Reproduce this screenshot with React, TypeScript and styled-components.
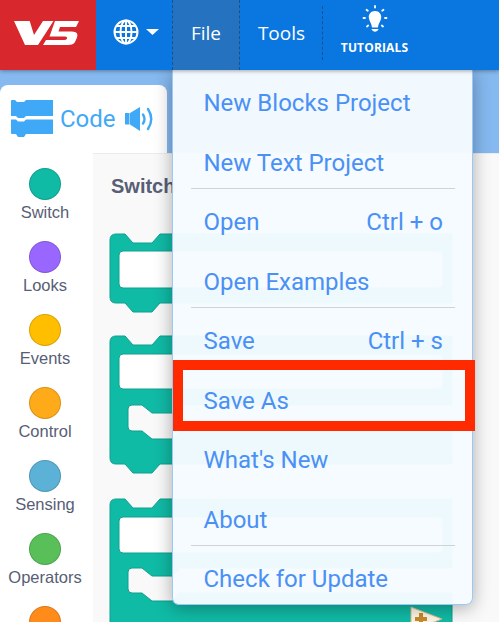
import { Fragment } from "react";
import styled, { createGlobalStyle } from "styled-components";

const GlobalStyle = createGlobalStyle`
  html, body {
    margin: 0;
    padding: 0;
    background: #f9f9f9;
  }
`;

const Page = styled.div`
  position: relative;
  width: 499px;
  height: 622px;
  overflow: hidden;
  display: flex;
  flex-direction: column;
`;

const NavBar = styled.header`
  position: relative;
  z-index: 3;
  flex: none;
  height: 70px;
  display: flex;
  background: #0a76e0;
  box-shadow: 0 1px 4px rgba(0, 0, 0, 0.35);
  color: #fff;
  font-family: "Open Sans", sans-serif;
`;

const Logo = styled.div`
  width: 96px;
  box-sizing: border-box;
  padding: 0 2px 4px 0;
  background: #d9272e;
  display: flex;
  align-items: center;
  justify-content: center;
`;

const LangButton = styled.div`
  width: 76px;
  display: flex;
  align-items: center;
  padding: 0 0 6px 17px;
  box-sizing: border-box;
  gap: 7px;
`;

const FileTab = styled.div`
  width: 68px;
  box-sizing: border-box;
  padding-bottom: 4px;
  background: #2472c0;
  border-left: 1px dashed #17518e;
  border-right: 1px dashed #17518e;
  display: flex;
  align-items: center;
  justify-content: center;
  font-size: 19px;
`;

const ToolsTab = styled.div`
  width: 83px;
  height: 54px;
  margin-top: 6px;
  padding-left: 1px;
  box-sizing: border-box;
  border-right: 1px dashed #17518e;
  display: flex;
  align-items: center;
  justify-content: center;
  font-size: 19px;
`;

const TutorialsTab = styled.div`
  width: 104px;
  display: flex;
  flex-direction: column;
  align-items: center;
  padding: 5px 1px 0 0;
  box-sizing: border-box;
  font-size: 12px;
  font-weight: 700;
  letter-spacing: 0.15px;
  gap: 8px;
  line-height: 14px;
`;

const Body = styled.main`
  flex: 1;
  min-height: 0;
  display: flex;
  flex-direction: column;
  padding-top: 15px;
  background: #85b9ef;
`;

const CodeTab = styled.div`
  flex: none;
  width: 167px;
  height: 68px;
  box-sizing: border-box;
  padding: 0 0 0 11px;
  display: flex;
  align-items: flex-start;
  gap: 7px;
  background: #fff;
  border-radius: 8px 8px 0 0;
  color: #40a9f7;
  font: 400 24px Roboto, sans-serif;
`;

const CodeLabel = styled.span`
  line-height: 36px;
  margin-top: 16px;
`;

const TabIcon = styled.svg`
  margin-top: 15px;
  flex: none;
`;

const SpeakerSvg = styled.svg`
  margin: 22px 0 0 2px;
  flex: none;
`;

const Workspace = styled.div`
  flex: 1;
  min-height: 0;
  display: flex;
`;

const CategoryList = styled.nav`
  flex: none;
  width: 93px;
  padding-top: 15px;
  background: #fff;
  display: flex;
  flex-direction: column;
  align-items: flex-start;
  box-sizing: border-box;
  gap: 8px;
`;

const Category = styled.div`
  flex: none;
  width: 90px;
  height: 65px;
  display: flex;
  flex-direction: column;
  align-items: center;
  gap: 3px;
  font: 400 16.5px "Liberation Sans", sans-serif;
  line-height: 18px;
  color: #575e75;
`;

const Dot = styled.span<{ $color: string }>`
  width: 32px;
  height: 32px;
  flex: none;
  box-sizing: border-box;
  border-radius: 50%;
  background: ${(p) => p.$color};
  border: 1px solid rgba(0, 0, 0, 0.15);
`;

const Flyout = styled.section`
  flex: 1;
  padding: 21px 0 0 17px;
  background: #f9f9f9;
  border-top: 1px solid #ececec;
  box-sizing: border-box;
  display: flex;
  flex-direction: column;
  gap: 24px;
`;

const FlyoutTitle = styled.h2`
  margin: 0 0 13px 1px;
  font: 700 20px "Liberation Sans", sans-serif;
  line-height: 22px;
  color: #575e75;
`;

const Block = styled.svg`
  display: block;
  flex: none;
  overflow: visible;
`;

const BlockBody = styled.path`
  fill: #10bba6;
  stroke: #0f9f8e;
  stroke-width: 1;
`;

const BlockSlot = styled.rect`
  fill: #fff;
  stroke: #0f9f8e;
  stroke-width: 1;
`;

const Menu = styled.ul`
  position: absolute;
  z-index: 2;
  top: 70px;
  left: 172px;
  width: 301px;
  height: 535px;
  margin: 0;
  padding: 0;
  list-style: none;
  box-sizing: border-box;
  display: flex;
  flex-direction: column;
  background: rgba(245, 251, 255, 0.97);
  border: 1px solid #9cc8f5;
  border-top: none;
  border-radius: 0 0 7px 7px;
  box-shadow: 0 3px 18px rgba(0, 0, 0, 0.32);
  font: 400 24px Roboto, sans-serif;
  color: #4a90f5;
`;

const MenuItem = styled.li`
  flex: none;
  height: 59.5px;
  box-sizing: border-box;
  display: flex;
  align-items: center;
  justify-content: space-between;
  padding: 7px 29px 0 30.5px;
`;

const Divider = styled.li`
  flex: none;
  height: 1px;
  margin: -1px 17px 0 18px;
  background: #cfd3d6;
`;

const Highlight = styled.div`
  position: absolute;
  z-index: 4;
  top: 360px;
  left: 173px;
  width: 302px;
  height: 71px;
  box-sizing: border-box;
  border: 10px solid #ff2a00;
`;

const categories = [
  { name: "Switch", color: "#10bba6" },
  { name: "Looks", color: "#9966ff" },
  { name: "Events", color: "#ffbf00" },
  { name: "Control", color: "#ffab19" },
  { name: "Sensing", color: "#5cb1d6" },
  { name: "Operators", color: "#59c059" },
  { name: "", color: "#ff8c1a" },
];

const menuItems: { label: string; shortcut?: string; divider?: boolean }[] = [
  { label: "New Blocks Project" },
  { label: "New Text Project", divider: true },
  { label: "Open", shortcut: "Ctrl + o" },
  { label: "Open Examples", divider: true },
  { label: "Save", shortcut: "Ctrl + s" },
  { label: "Save As" },
  { label: "What's New" },
  { label: "About", divider: true },
  { label: "Check for Update" },
];

// top of a stack block, with the notch the previous block sits in
const TOP = "M0 6 Q0 0 6 0 H15 L23 9 H42 L50 0 H342";
const MOUTH = (y: number, h: number) =>
  `V${y} H70 L62 ${y + 8} H42 L32 ${y} H22 Q18 ${y} 18 ${y + 4} V${y + h - 4} Q18 ${y + h} 22 ${y + h} H32 L42 ${y + h + 8} H62 L70 ${y + h} H342`;
const BOTTOM = (y: number) => `V${y} H50 L42 ${y + 9} H23 L15 ${y} H6 Q0 ${y} 0 ${y - 6} Z`;

function V5Logo() {
  return (
    <svg width="66" height="24" viewBox="0 0 66 24">
      <path fill="#fff" d="M0 0 H15.700 L20 14 L29 0 H39.500 L24 24 H11 Z" />
      <path
        fill="#fff"
        d="M41 0 H65 L62 6 H46 L44.500 10.500 H58 Q65 10.500 63 16.500 L61 21 Q59.500 24 54 24 H29 L32 19 H50 Q52.500 19 53 17.500 Q53.500 15.500 51 15.500 H35.500 Z"
      />
    </svg>
  );
}

function GlobeIcon() {
  return (
    <svg width="26" height="26" viewBox="0 0 26 26" fill="none" stroke="#fff" strokeWidth="2">
      <circle cx="13" cy="13" r="11.500" />
      <ellipse cx="13" cy="13" rx="5.500" ry="11.500" />
      <path d="M13 1.500 V24.500 M1.500 13 H24.500 M3.500 7 H22.500 M3.500 19 H22.500" />
    </svg>
  );
}

function Caret() {
  return (
    <svg width="13" height="6" viewBox="0 0 13 6">
      <path fill="#fff" d="M0 0 H13 L6.500 6 Z" />
    </svg>
  );
}

function BulbIcon() {
  return (
    <svg width="28" height="28" viewBox="0 0 28 28">
      <path fill="#fff" d="M14 6 C9.500 6 7.500 9.500 7.800 12.500 C8.200 16 10.500 18 11 22.500 H17 C17.500 18 20 16 20.200 12.500 C20.500 9.500 18.500 6 14 6 Z" />
      <path fill="#fff" d="M10.500 24 H17.500 Q17.500 25 16 26 Q14 27.500 12 26 Q10.500 25 10.500 24 Z" />
      <path
        stroke="#fff"
        strokeWidth="1.800"
        strokeLinecap="round"
        d="M14 1 V2.500 M5.500 4.800 L6.800 5.800 M22.500 4.800 L21.200 5.800 M2.500 13 H4 M24 13 H25.500 M6 21.500 L7.200 20.500 M22 21.500 L20.800 20.500"
      />
    </svg>
  );
}

function CodeBlocksIcon() {
  return (
    <TabIcon width="42" height="38" viewBox="0 0 42 38">
      <path
        fill="#40a9f7"
        d="M0 1 Q0 0 1 0 H4 L6 2 H13 L15 0 H42 V16 H15 L13 18 H7 L5 16 H0 Z M0 19.500 H5 L7 21.500 H13 L15 19.500 H42 V34 H15 L13 37 H7 L5 34 H1 Q0 34 0 33 Z"
      />
    </TabIcon>
  );
}

function SpeakerIcon() {
  return (
    <SpeakerSvg width="28" height="24" viewBox="0 0 28 24">
      <path fill="#40a9f7" d="M0 6 H4.500 V17.500 H0 Z M5 6 L15 0 V24 L5 17.500 Z" />
      <path
        fill="none"
        stroke="#40a9f7"
        strokeWidth="2.400"
        strokeLinecap="round"
        d="M18 7.500 Q21 12 18 16.500 M23 2 Q29.500 12 23 22"
      />
    </SpeakerSvg>
  );
}

export default function App() {
  return (
    <Page>
      <GlobalStyle />
      <NavBar>
        <Logo>
          <V5Logo />
        </Logo>
        <LangButton>
          <GlobeIcon />
          <Caret />
        </LangButton>
        <FileTab>File</FileTab>
        <ToolsTab>Tools</ToolsTab>
        <TutorialsTab>
          <BulbIcon />
          TUTORIALS
        </TutorialsTab>
      </NavBar>
      <Body>
        <CodeTab>
          <CodeBlocksIcon />
          <CodeLabel>Code</CodeLabel>
          <SpeakerIcon />
        </CodeTab>
        <Workspace>
          <CategoryList>
            {categories.map((c) => (
              <Category key={c.color}>
                <Dot $color={c.color} />
                {c.name}
              </Category>
            ))}
          </CategoryList>
          <Flyout>
            <FlyoutTitle>Switch</FlyoutTitle>
            <Block width="342" height="78" viewBox="0 0 342 78">
              <BlockBody d={`${TOP} ${BOTTOM(69)}`} />
              <BlockSlot x="9" y="17" width="324" height="37" rx="4" />
            </Block>
            <Block width="342" height="139" viewBox="0 0 342 139">
              <BlockBody d={`${TOP} ${MOUTH(69, 26)} ${BOTTOM(128)}`} />
              <BlockSlot x="9" y="18" width="324" height="35" rx="4" />
            </Block>
            <Block width="342" height="200" viewBox="0 0 342 200">
              <BlockBody d={`${TOP} ${MOUTH(69, 25)} ${BOTTOM(190)}`} />
              <BlockSlot x="9" y="18" width="324" height="36" rx="4" />
              <path fill="#fdf6e8" stroke="#d9b98a" d="M301 108 L332 120 L301 132 Z" />
              <path fill="#c98a2b" d="M309 114 H313 V118 H317 V122 H313 V126 H309 V122 H305 V118 H309 Z" />
            </Block>
          </Flyout>
        </Workspace>
      </Body>
      <Menu>
        {menuItems.map((item) => (
          <Fragment key={item.label}>
            <MenuItem>
              <span>{item.label}</span>
              {item.shortcut && <span>{item.shortcut}</span>}
            </MenuItem>
            {item.divider && <Divider />}
          </Fragment>
        ))}
      </Menu>
      <Highlight />
    </Page>
  );
}
